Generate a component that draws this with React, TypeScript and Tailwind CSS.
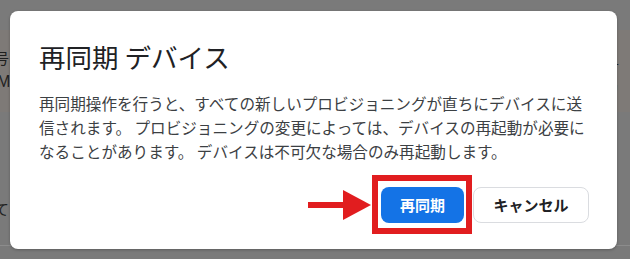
/**
 * ResyncDeviceDialog — confirmation modal over a dimmed page, with a red
 * annotation box and arrow pointing at the primary action.
 */

const font = "font-['Noto_Sans_CJK_JP','Noto_Sans',sans-serif]";

/** Dimmed page content peeking out around the dialog. */
function DimmedPage() {
  return (
    <div className={`flex h-[259px] w-[630px] flex-col bg-[#7a7a7a] text-[15px] text-[#1f1f1f] ${font}`}>
      <div className="h-[30px]" />
      <div className="flex h-[82px] justify-between bg-[#7e7a77]">
        <div className="flex flex-col pt-[16px] leading-[24px]">
          <span className="-ml-[6px]">号</span>
          <span className="-ml-[3px] text-[16px] font-['Liberation_Sans',sans-serif]">MN</span>
        </div>
        <div className="pt-[22px] leading-[24px]">
          <span className="-mr-[4px]">号カ</span>
        </div>
      </div>
      <div className="flex flex-1 flex-col justify-end">
        <span className="-ml-[6px] leading-[24px]">て</span>
        <div className="mt-[24px] h-px bg-[#8c8c8c]" />
        <div className="h-[13px]" />
      </div>
    </div>
  );
}

/** Red arrow drawn to the left of the highlighted button. */
function Arrow() {
  return (
    <svg
      className="absolute -left-[73px] top-[3px] h-[30px] w-[63px]"
      viewBox="0 0 63 30"
    >
      <rect x="0" y="12" width="37" height="6" fill="#e11d1f" />
      <polygon points="35,0 63,15 35,30" fill="#e11d1f" />
    </svg>
  );
}

export default function App() {
  return (
    <div className="relative h-[259px] w-[630px] overflow-hidden">
      <DimmedPage />

      <div
        className={`absolute left-[10px] top-[11px] flex h-[238px] w-[607px] flex-col rounded-[8px] bg-white pl-[29px] pr-[28px] pt-[26px] shadow-[0_1px_3px_rgba(0,0,0,0.25)] ${font}`}
      >
        <h2 className="text-[26.5px] leading-[40px] text-[#202124]">再同期 デバイス</h2>
        <p className="mt-[14px] whitespace-nowrap text-[15.6px] leading-[24px] text-[#3c4043]">
          再同期操作を行うと、すべての新しいプロビジョニングが直ちにデバイスに送
          <br />
          信されます。 プロビジョニングの変更によっては、デバイスの再起動が必要に
          <br />
          なることがあります。 デバイスは不可欠な場合のみ再起動します。
        </p>
        <div className="mt-auto mb-[26px] flex items-center justify-end gap-[9px]">
          <span className="relative">
            <Arrow />
            <span className="absolute -left-[9px] -top-[12px] h-[59px] w-[100px] border-[6px] border-[#e11d1f]" />
            <button className="h-[36px] w-[83px] rounded-[8px] bg-[#1473e6] text-[15px] font-bold text-white">
              再同期
            </button>
          </span>
          <button className="h-[36px] w-[116px] rounded-[8px] border border-[#dadce0] bg-white text-[15px] font-bold text-[#202124]">
            キャンセル
          </button>
        </div>
      </div>
    </div>
  );
}
